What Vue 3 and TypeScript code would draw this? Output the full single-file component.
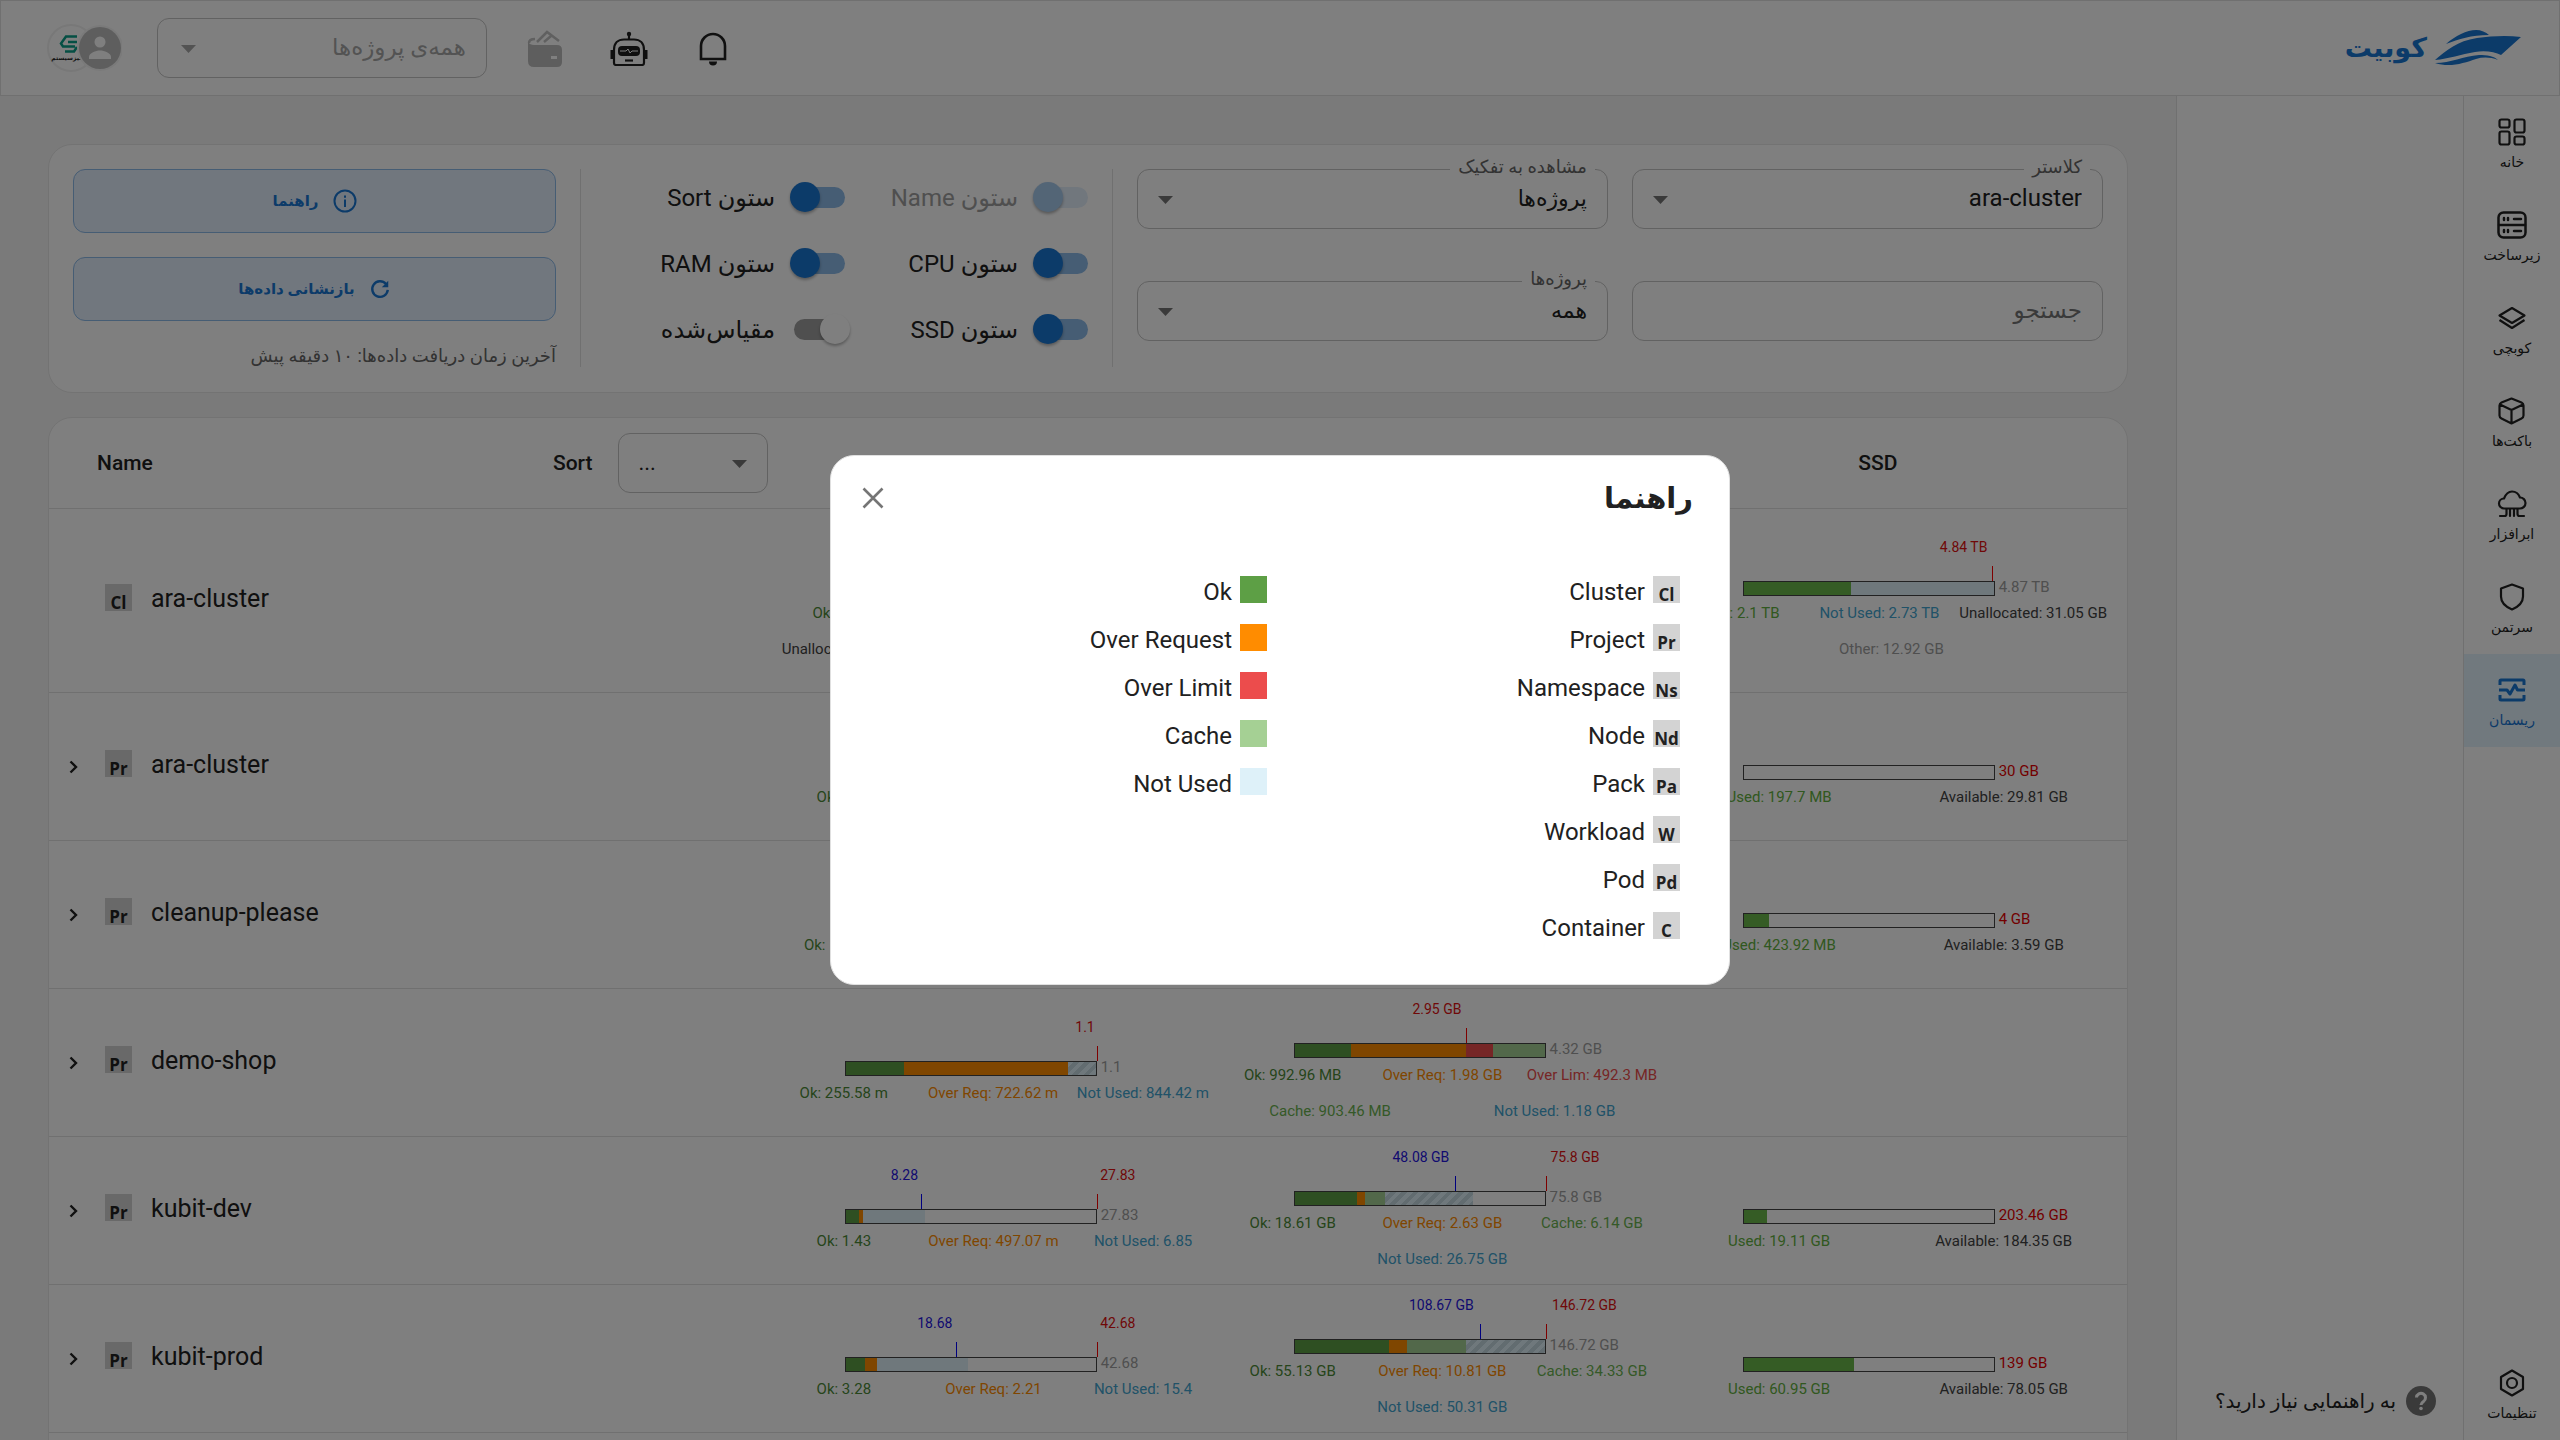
<script setup lang="ts">
interface Segment { kind: string; pct: number }
interface Mark { kind: 'request' | 'limit'; at: number; text: string; side: 'before' | 'after' }
interface Note { kind: string; text: string }
interface Usage {
  segments: Segment[]
  marks: Mark[]
  total: string
  totalKind: 'plain' | 'quota'
  notes: Note[][]
}
interface Row { badge: string; name: string; expandable: boolean; cells: (Usage | null)[] }

const blank: Note = { kind: 'ok', text: '' }

const rows: Row[] = [
  {
    badge: 'Cl',
    name: 'ara-cluster',
    expandable: false,
    cells: [
      {
        segments: [], marks: [], total: '', totalKind: 'plain',
        notes: [
          [{ kind: 'ok', text: 'Ok: 53.28' }, blank, blank],
          [{ kind: 'free', text: 'Unallocated: 38.43' }, blank, blank],
        ],
      },
      null,
      {
        segments: [{ kind: 'used', pct: 43 }, { kind: 'idle', pct: 57 }],
        marks: [{ kind: 'limit', at: 99, text: '4.84 TB', side: 'before' }],
        total: '4.87 TB', totalKind: 'plain',
        notes: [
          [{ kind: 'used', text: 'Used: 2.1 TB' }, { kind: 'idle', text: 'Not Used: 2.73 TB' }, { kind: 'free', text: 'Unallocated: 31.05 GB' }],
          [{ kind: 'other', text: 'Other: 12.92 GB' }],
        ],
      },
    ],
  },
  {
    badge: 'Pr',
    name: 'ara-cluster',
    expandable: true,
    cells: [
      { segments: [], marks: [], total: '', totalKind: 'plain', notes: [[{ kind: 'ok', text: 'Ok: 1.26' }, blank, blank]] },
      null,
      {
        segments: [], marks: [], total: '30 GB', totalKind: 'quota',
        notes: [[{ kind: 'used', text: 'Used: 197.7 MB' }, { kind: 'free', text: 'Available: 29.81 GB' }]],
      },
    ],
  },
  {
    badge: 'Pr',
    name: 'cleanup-please',
    expandable: true,
    cells: [
      { segments: [], marks: [], total: '', totalKind: 'plain', notes: [[{ kind: 'ok', text: 'Ok: 13.17 m' }, blank, blank]] },
      null,
      {
        segments: [{ kind: 'used', pct: 10 }], marks: [], total: '4 GB', totalKind: 'quota',
        notes: [[{ kind: 'used', text: 'Used: 423.92 MB' }, { kind: 'free', text: 'Available: 3.59 GB' }]],
      },
    ],
  },
  {
    badge: 'Pr',
    name: 'demo-shop',
    expandable: true,
    cells: [
      {
        segments: [{ kind: 'ok', pct: 23 }, { kind: 'request', pct: 66 }, { kind: 'striped', pct: 11 }],
        marks: [{ kind: 'limit', at: 100, text: '1.1', side: 'before' }],
        total: '1.1', totalKind: 'plain',
        notes: [[{ kind: 'ok', text: 'Ok: 255.58 m' }, { kind: 'request', text: 'Over Req: 722.62 m' }, { kind: 'idle', text: 'Not Used: 844.42 m' }]],
      },
      {
        segments: [{ kind: 'ok', pct: 22.5 }, { kind: 'request', pct: 46 }, { kind: 'limit', pct: 11 }, { kind: 'cache', pct: 20.5 }],
        marks: [{ kind: 'limit', at: 68.5, text: '2.95 GB', side: 'before' }],
        total: '4.32 GB', totalKind: 'plain',
        notes: [
          [{ kind: 'ok', text: 'Ok: 992.96 MB' }, { kind: 'request', text: 'Over Req: 1.98 GB' }, { kind: 'limit', text: 'Over Lim: 492.3 MB' }],
          [{ kind: 'cache', text: 'Cache: 903.46 MB' }, { kind: 'idle', text: 'Not Used: 1.18 GB' }],
        ],
      },
      null,
    ],
  },
  {
    badge: 'Pr',
    name: 'kubit-dev',
    expandable: true,
    cells: [
      {
        segments: [{ kind: 'ok', pct: 5 }, { kind: 'request', pct: 1.6 }, { kind: 'idle', pct: 24.8 }],
        marks: [
          { kind: 'request', at: 30, text: '8.28', side: 'before' },
          { kind: 'limit', at: 100, text: '27.83', side: 'after' },
        ],
        total: '27.83', totalKind: 'plain',
        notes: [[{ kind: 'ok', text: 'Ok: 1.43' }, { kind: 'request', text: 'Over Req: 497.07 m' }, { kind: 'idle', text: 'Not Used: 6.85' }]],
      },
      {
        segments: [{ kind: 'ok', pct: 24.6 }, { kind: 'request', pct: 3.6 }, { kind: 'cache', pct: 8 }, { kind: 'striped', pct: 35.2 }],
        marks: [
          { kind: 'request', at: 64, text: '48.08 GB', side: 'before' },
          { kind: 'limit', at: 100, text: '75.8 GB', side: 'after' },
        ],
        total: '75.8 GB', totalKind: 'plain',
        notes: [
          [{ kind: 'ok', text: 'Ok: 18.61 GB' }, { kind: 'request', text: 'Over Req: 2.63 GB' }, { kind: 'cache', text: 'Cache: 6.14 GB' }],
          [{ kind: 'idle', text: 'Not Used: 26.75 GB' }],
        ],
      },
      {
        segments: [{ kind: 'used', pct: 9 }], marks: [], total: '203.46 GB', totalKind: 'quota',
        notes: [[{ kind: 'used', text: 'Used: 19.11 GB' }, { kind: 'free', text: 'Available: 184.35 GB' }]],
      },
    ],
  },
  {
    badge: 'Pr',
    name: 'kubit-prod',
    expandable: true,
    cells: [
      {
        segments: [{ kind: 'ok', pct: 7.3 }, { kind: 'request', pct: 5.2 }, { kind: 'idle', pct: 36.5 }],
        marks: [
          { kind: 'request', at: 44, text: '18.68', side: 'before' },
          { kind: 'limit', at: 100, text: '42.68', side: 'after' },
        ],
        total: '42.68', totalKind: 'plain',
        notes: [[{ kind: 'ok', text: 'Ok: 3.28' }, { kind: 'request', text: 'Over Req: 2.21' }, { kind: 'idle', text: 'Not Used: 15.4' }]],
      },
      {
        segments: [{ kind: 'ok', pct: 37.8 }, { kind: 'request', pct: 7.2 }, { kind: 'cache', pct: 23.6 }, { kind: 'striped', pct: 31.4 }],
        marks: [
          { kind: 'request', at: 74, text: '108.67 GB', side: 'before' },
          { kind: 'limit', at: 100, text: '146.72 GB', side: 'after' },
        ],
        total: '146.72 GB', totalKind: 'plain',
        notes: [
          [{ kind: 'ok', text: 'Ok: 55.13 GB' }, { kind: 'request', text: 'Over Req: 10.81 GB' }, { kind: 'cache', text: 'Cache: 34.33 GB' }],
          [{ kind: 'idle', text: 'Not Used: 50.31 GB' }],
        ],
      },
      {
        segments: [{ kind: 'used', pct: 44 }], marks: [], total: '139 GB', totalKind: 'quota',
        notes: [[{ kind: 'used', text: 'Used: 60.95 GB' }, { kind: 'free', text: 'Available: 78.05 GB' }]],
      },
    ],
  },
]

const switches = [
  { label: 'ستون Name', on: true, disabled: true },
  { label: 'ستون Sort', on: true, disabled: false },
  { label: 'ستون CPU', on: true, disabled: false },
  { label: 'ستون RAM', on: true, disabled: false },
  { label: 'ستون SSD', on: true, disabled: false },
  { label: 'مقیاس‌شده', on: false, disabled: false },
]

const nav = [
  { label: 'خانه', icon: 'home' },
  { label: 'زیرساخت', icon: 'server' },
  { label: 'کوبچی', icon: 'layers' },
  { label: 'باکت‌ها', icon: 'box' },
  { label: 'ابرافزار', icon: 'cloud' },
  { label: 'سرتمن', icon: 'shield' },
  { label: 'ریسمان', icon: 'pulse' },
]

const kinds = [
  ['Cl', 'Cluster'], ['Pr', 'Project'], ['Ns', 'Namespace'], ['Nd', 'Node'],
  ['Pa', 'Pack'], ['W', 'Workload'], ['Pd', 'Pod'], ['C', 'Container'],
]
const colours = [
  ['ok', 'Ok'], ['request', 'Over Request'], ['limit', 'Over Limit'], ['cache', 'Cache'], ['idle', 'Not Used'],
]
</script>

<template>
  <div class="page" dir="rtl">
    <header class="topbar">
      <a class="brand" href="#">
        <svg width="86" height="36" viewBox="0 0 86 36" fill="#1976d2" aria-hidden="true">
          <path d="M11 14C20 6 32 0 41 0c5 0 10 2 13 5-18 0-30 4-43 9z" />
          <path d="M0 30C12 20 22 11 42 8c14-2 30-3 44-1L66 25c-6-3-16-5-26-3C26 24 14 29 0 30z" />
          <path d="M0 33c16 0 28-7 44-8 8 0 15 1 19 5-8-3-15-3-22-1-12 4-26 9-41 4z" />
        </svg>
        <span>کوبیت</span>
      </a>
      <div class="tools">
        <button class="tool" aria-label="اعلان‌ها">
          <svg width="36" height="36" viewBox="0 0 36 36" fill="none" stroke="#212121" stroke-width="2.600">
            <path d="M6 29V16a12 12 0 0 1 24 0v13z" /><path d="M14 31.500h8a4 4 0 0 1-8 0z" fill="#212121" stroke="none" />
          </svg>
        </button>
        <button class="tool" aria-label="دستیار">
          <svg width="38" height="36" viewBox="0 0 38 36" fill="none" stroke="#212121" stroke-width="2.200">
            <path d="M19 9V4" /><circle cx="19" cy="4" r="2.200" fill="#212121" stroke="none" />
            <path d="M4 33V20C4 13 8 9.500 14 9.500h10c6 0 10 3.500 10 10.500v13q0 2-2 2H6q-2 0-2-2z" />
            <path d="M2 20v9M36 20v9" stroke-width="3" />
            <rect x="8" y="16" width="22" height="10" rx="4" fill="#212121" stroke="none" />
            <path d="M10 21h6l2-2 2 4 2-2h6" stroke="#fff" stroke-width="1" /><path d="M15 30.500h8" />
          </svg>
        </button>
        <button class="tool" aria-label="کیف پول">
          <svg width="36" height="38" viewBox="0 0 36 38" fill="none">
            <path d="M2 14c0-3 2-4 6-4" stroke="#c0c0c0" stroke-width="2.500" /><path d="M10 13L20 3l12 9M17 13l7-6" stroke="#c0c0c0" stroke-width="2.500" />
            <path d="M1 13q2 3 6 3h23q5 0 5 5v12q0 5-5 5H7q-6 0-6-6z" fill="#bdbdbd" /><rect x="24" y="27" width="6" height="3" fill="#fff" />
          </svg>
        </button>
        <div class="pick pick-top">
          <select class="muted" aria-label="پروژه"><option>همه‌ی پروژه‌ها</option></select>
          <svg class="caret faint" width="15" height="8" viewBox="0 0 15 8"><path d="M0 0h15L7.500 8z" /></svg>
        </div>
        <div class="avatars">
          <svg width="76" height="50" viewBox="0 0 76 50" aria-hidden="true">
            <circle cx="25" cy="25" r="23" fill="#fff" stroke="#f0f0f0" stroke-width="2" />
            <path d="M31 13.500H20l-5 7 2 3h12M31 19H22M19 28.500h9l3-4.500" fill="none" stroke="#0a9f88" stroke-width="2.500" />
            <text x="21" y="37" text-anchor="middle" class="org">کیزسیستم</text>
            <circle cx="54" cy="25" r="23" fill="#f5f5f5" />
            <circle cx="54" cy="25" r="21" fill="#bdbdbd" />
            <circle cx="54" cy="19" r="5.500" fill="#fff" /><path d="M43 36v-2c0-4 7-6.500 11-6.500s11 2.500 11 6.500v2z" fill="#fff" />
          </svg>
        </div>
      </div>
    </header>

    <div class="body">
      <nav class="rail">
        <a v-for="item in nav" :key="item.icon" href="#" class="rail-item" :class="{ active: item.icon === 'pulse' }">
          <svg width="30" height="28" viewBox="0 0 30 28" fill="none" stroke="currentColor" stroke-width="2.200" stroke-linejoin="round" stroke-linecap="round" aria-hidden="true">
            <g v-if="item.icon === 'home'">
              <rect x="2.500" y="1.500" width="10" height="8" rx="2" /><rect x="2.500" y="13.500" width="10" height="13" rx="2" />
              <rect x="17.500" y="1.500" width="10" height="13" rx="2" /><rect x="17.500" y="18.500" width="10" height="8" rx="2" />
            </g>
            <g v-else-if="item.icon === 'server'">
              <rect x="1.500" y="1.500" width="27" height="25" rx="5" stroke-width="2.500" /><path d="M2 14h26" stroke-width="2.500" />
              <path d="M7 7v2M11 7v2M17 8h7M7 19v2M11 19v2M17 20h7" stroke-width="2.500" />
            </g>
            <g v-else-if="item.icon === 'layers'"><path d="M15 4l12.500 7.500L15 19 2.500 11.500zM2.500 16L15 24l12.500-8" stroke-linecap="butt" /></g>
            <g v-else-if="item.icon === 'box'">
              <path d="M14.500 1.500l10 4q2 1 2 3v10q0 2-2 3l-10 5-10-5q-2-1-2-3v-10q0-2 2-3zM3 7.500l11.500 5.500L26 7.500M14.500 13v13" />
            </g>
            <g v-else-if="item.icon === 'cloud'">
              <path d="M7 18.500a5 5 0 0 1 0-10C9 3.500 12 1.500 15 1.500s6.500 2 8 6a5.500 5.500 0 0 1 0 11zM13 19v7M17 19v7M9.500 19v5q0 2-2 2H3M20.500 19v5q0 2 2 2H27" />
            </g>
            <g v-else-if="item.icon === 'shield'"><path d="M15 1.500l11 4v8c0 6-4 10-11 13-7-3-11-7-11-13v-8z" /></g>
            <g v-else stroke-width="3" stroke-linecap="butt">
              <path d="M3 9V5q0-1 1-1h22q1 0 1 1v4M3 19v4q0 1 1 1h22q1 0 1-1v-4M2 14h8l3 4 5-9 2.500 5H28" />
            </g>
          </svg>
          <span>{{ item.label }}</span>
        </a>
        <a href="#" class="rail-item settings">
          <svg width="30" height="28" viewBox="0 0 30 28" fill="none" stroke="currentColor" stroke-width="2.200" stroke-linejoin="round" aria-hidden="true">
            <path d="M15 1.500L26 8v12l-11 6.500L4 20V8z" /><circle cx="15" cy="14" r="5" />
          </svg>
          <span>تنظیمات</span>
        </a>
      </nav>

      <aside class="panel">
        <a class="help" href="#">
          <svg width="30" height="30" viewBox="0 0 30 30" aria-hidden="true">
            <circle cx="15" cy="15" r="15" fill="#757575" />
            <path d="M10.500 11.500a4.500 4.500 0 1 1 7 4c-1.800 1.200-2.500 1.800-2.500 3.500" fill="none" stroke="#fff" stroke-width="3" /><circle cx="15" cy="22.500" r="1.800" fill="#fff" />
          </svg>
          <span>به راهنمایی نیاز دارید؟</span>
        </a>
      </aside>

      <main class="content">
        <section class="card filters">
          <div class="fields">
            <div class="pick">
              <label for="cluster">کلاستر</label>
              <select id="cluster"><option>ara-cluster</option></select>
              <svg class="caret" width="15" height="8" viewBox="0 0 15 8"><path d="M0 0h15L7.500 8z" /></svg>
            </div>
            <div class="pick">
              <label for="split">مشاهده به تفکیک</label>
              <select id="split"><option>پروژه‌ها</option></select>
              <svg class="caret" width="15" height="8" viewBox="0 0 15 8"><path d="M0 0h15L7.500 8z" /></svg>
            </div>
            <div class="pick">
              <input type="text" placeholder="جستجو" aria-label="جستجو" />
            </div>
            <div class="pick">
              <label for="projects">پروژه‌ها</label>
              <select id="projects"><option>همه</option></select>
              <svg class="caret" width="15" height="8" viewBox="0 0 15 8"><path d="M0 0h15L7.500 8z" /></svg>
            </div>
          </div>
          <div class="switches">
            <label v-for="s in switches" :key="s.label" class="switch" :class="{ disabled: s.disabled }">
              <input type="checkbox" :checked="s.on" :disabled="s.disabled" />
              <span>{{ s.label }}</span>
            </label>
          </div>
          <div class="actions">
            <button class="action">
              <svg width="24" height="24" viewBox="0 0 24 24" fill="none" stroke="currentColor" stroke-width="2">
                <circle cx="12" cy="12" r="10.500" /><path d="M12 10.500V18M12 6.500v2.200" />
              </svg>
              <span>راهنما</span>
            </button>
            <button class="action">
              <svg width="22" height="22" viewBox="0 0 24 24" fill="none" stroke="currentColor" stroke-width="2.600">
                <path d="M18.500 6.500A8.500 8.500 0 1 0 20.500 13" /><path d="M21 3v7h-7z" fill="currentColor" stroke="none" />
              </svg>
              <span>بازنشانی داده‌ها</span>
            </button>
            <p class="stamp">آخرین زمان دریافت داده‌ها: ۱۰ دقیقه پیش</p>
          </div>
        </section>

        <section class="card listing" dir="ltr">
          <table>
            <colgroup><col /><col class="c-sort" /><col class="c-use" /><col class="c-use" /><col class="c-last" /></colgroup>
            <thead>
              <tr>
                <th scope="col" class="h-name">Name</th>
                <th scope="col">
                  <div class="sorter">
                    <label for="sort">Sort</label>
                    <div class="pick">
                      <select id="sort"><option>...</option></select>
                      <svg class="caret" width="15" height="8" viewBox="0 0 15 8"><path d="M0 0h15L7.500 8z" /></svg>
                    </div>
                  </div>
                </th>
                <th scope="col" class="h-use">CPU</th>
                <th scope="col" class="h-use">RAM</th>
                <th scope="col" class="h-use last">SSD</th>
              </tr>
            </thead>
            <tbody>
              <tr v-for="(row, i) in rows" :key="i" :class="{ tall: !row.expandable }">
                <td colspan="2">
                  <div class="who">
                    <button v-if="row.expandable" class="chev" :aria-label="row.name">
                      <svg width="10" height="14" viewBox="0 0 10 14" fill="none" stroke="#212121" stroke-width="2.400"><path d="M1.500 1.500L7 7l-5.500 5.500" /></svg>
                    </button>
                    <span v-else class="chev"></span>
                    <span class="badge">{{ row.badge }}</span>
                    <span class="name">{{ row.name }}</span>
                  </div>
                </td>
                <td v-for="(cell, c) in row.cells" :key="c" :class="{ last: c === 2 }">
                  <div v-if="cell" class="usage">
                    <div class="gauge">
                      <div class="marks">
                        <template v-for="m in cell.marks" :key="m.kind">
                          <i class="tick" :class="m.kind" :style="{ left: m.at + '%' }"></i>
                          <span class="mark" :class="[m.kind, m.side]" :style="{ left: m.at + '%' }">{{ m.text }}</span>
                        </template>
                      </div>
                      <div class="bar">
                        <i v-for="s in cell.segments" :key="s.kind" :class="'bg-' + s.kind" :style="{ width: s.pct + '%' }"></i>
                        <span class="total" :class="cell.totalKind">{{ cell.total }}</span>
                      </div>
                    </div>
                    <div v-for="(line, l) in cell.notes" :key="l" class="notes">
                      <span v-for="(n, k) in line" :key="k" :class="'tx-' + n.kind">{{ n.text }}</span>
                    </div>
                  </div>
                </td>
              </tr>
            </tbody>
          </table>
        </section>
      </main>
    </div>

    <div class="backdrop">
      <div class="dialog" role="dialog" aria-modal="true" aria-labelledby="dialog-title">
        <div class="dialog-head">
          <h2 id="dialog-title">راهنما</h2>
          <button class="close" aria-label="بستن">
            <svg width="22" height="22" viewBox="0 0 22 22" fill="none" stroke="#757575" stroke-width="2.600"><path d="M1.500 1.500l19 19M20.500 1.500l-19 19" /></svg>
          </button>
        </div>
        <div class="guide">
          <ul>
            <li v-for="k in kinds" :key="k[0]"><span class="badge">{{ k[0] }}</span><span>{{ k[1] }}</span></li>
          </ul>
          <ul>
            <li v-for="c in colours" :key="c[0]"><i class="swatch" :class="'bg-' + c[0]"></i><span>{{ c[1] }}</span></li>
          </ul>
        </div>
      </div>
    </div>
  </div>
</template>

<style>
body { margin: 0; overflow: hidden; }
</style>

<style scoped>
* { box-sizing: border-box; }
.page {
  height: 100vh;
  display: flex;
  flex-direction: column;
  overflow: hidden;
  background: #f5f5f5;
  color: #212121;
  font-family: Roboto, "DejaVu Sans", sans-serif;
  font-size: 24px;
}
a { color: inherit; text-decoration: none; }
button { border: 0; padding: 0; background: none; font: inherit; color: inherit; }
svg { display: block; flex: none; }

.topbar {
  flex: none;
  height: 96px;
  display: flex;
  align-items: center;
  justify-content: space-between;
  padding: 0 38px 0 45px;
  background: #fff;
  border: 1px solid #e0e0e0;
}
.brand { display: flex; align-items: center; gap: 8px; color: #1976d2; font-size: 27px; font-weight: 700; }
.tools { display: flex; align-items: center; }
.tool { display: flex; align-items: center; justify-content: center; width: 84px; height: 60px; }
.pick-top { width: 330px; margin-inline: 16px 35px; }
.org { font: 700 6px "DejaVu Sans", sans-serif; fill: #212121; }

.body { flex: 1; min-height: 0; display: flex; }
.rail { flex: none; width: 97px; display: flex; flex-direction: column; background: #fff; border-left: 1px solid #e0e0e0; }
.rail-item {
  height: 93px;
  display: flex;
  flex-direction: column;
  align-items: center;
  justify-content: center;
  gap: 6px;
  padding-top: 5px;
  font-size: 14px;
  line-height: 20px;
}
.rail-item.active { background: #e3f2fd; color: #1976d2; }
.settings { margin-top: auto; }
.panel { flex: none; width: 287px; display: flex; align-items: flex-end; padding: 24px 27px; background: #fff; border-left: 1px solid #e0e0e0; }
.help { display: flex; align-items: center; gap: 10px; font-size: 20px; line-height: 30px; white-space: nowrap; }

.content { flex: 1; min-width: 0; padding: 48px 48px 0; overflow: hidden; display: flex; flex-direction: column; gap: 24px; }
.card { flex: none; background: #fff; border: 1px solid #e6e6e6; border-radius: 24px; }
.filters { display: flex; gap: 24px; padding: 24px 24px 25px; }
.fields { flex: 2 0 0; display: grid; grid-template-columns: 1fr 1fr; column-gap: 24px; row-gap: 52px; align-content: start; }
.pick { position: relative; }
.pick select, .pick input {
  appearance: none;
  display: block;
  width: 100%;
  height: 60px;
  padding: 0 20px 2px;
  border: 1px solid #c4c4c4;
  border-radius: 12px;
  background: #fff;
  color: #212121;
  font: inherit;
  font-size: 22px;
  opacity: 1;
}
.pick #cluster { font-size: 24px; }
.pick input::placeholder { color: #757575; opacity: 1; }
.pick select.muted { color: #a6a6a6; }
.pick input, .pick select.muted { font-size: 23px; }
.pick label { position: absolute; top: -15px; right: 13px; padding: 0 8px; background: #fff; color: #666; font-size: 18px; line-height: 26px; }
.caret { position: absolute; left: 21px; top: 27px; fill: #757575; pointer-events: none; }
.caret.faint { fill: #a6a6a6; }
.pick-top .caret { left: 24px; }

.switches {
  flex: 1 0 50px;
  min-width: 0;
  display: grid;
  grid-template-columns: 1fr 1fr;
  grid-auto-rows: 57px;
  row-gap: 9px;
  column-gap: 3px;
  padding: 0 24px;
  border-right: 1px solid #e0e0e0;
  border-left: 1px solid #e0e0e0;
}
.switch { display: flex; align-items: center; gap: 19px; white-space: nowrap; font-size: 24px; line-height: 28px; }
.switch input { appearance: none; position: relative; flex: none; width: 51px; height: 21px; margin: 0; border-radius: 11px; background: #9e9e9e; }
.switch input::before {
  content: "";
  position: absolute;
  top: -5px;
  right: -5px;
  width: 30px;
  height: 30px;
  border-radius: 50%;
  background: #fff;
  box-shadow: 0 2px 3px rgba(0, 0, 0, 0.3);
}
.switch input:checked { background: #8cbae8; }
.switch input:checked::before { right: 25px; background: #1976d2; }
.switch.disabled { color: #9e9e9e; }
.switch input:disabled { background: #e3eefa; }
.switch input:disabled::before { background: #a7caed; }

.actions { flex: 1 0 0; min-width: 0; display: flex; flex-direction: column; gap: 24px; }
.action {
  height: 64px;
  display: flex;
  align-items: center;
  justify-content: center;
  gap: 14px;
  border: 1px solid #8cbae8;
  border-radius: 12px;
  background: #e3eefd;
  color: #1976d2;
  font-size: 15px;
  font-weight: 700;
}
.stamp { margin: 0; color: #666; font-size: 18px; line-height: 22px; white-space: nowrap; }

.listing { min-height: 100vh; }
table { width: 100%; table-layout: fixed; border-collapse: separate; border-spacing: 0; }
.c-sort { width: 10.400%; }
.c-use { width: 21.600%; }
.c-last { width: 22.150%; }
th, td { padding: 0; border-bottom: 1px solid #e0e0e0; vertical-align: middle; }
th { height: 91px; font-size: 21px; font-weight: 500; text-align: left; }
.h-name { padding-left: 48px; }
.h-use { padding-right: 32px; text-align: center; }
.h-use.last { padding-right: 38px; }
td.last { padding-right: 11px; }
td { height: 148px; }
.tall td { height: 184px; }
.sorter { display: flex; align-items: center; gap: 25px; }
.sorter > label { font-size: 21px; }
.sorter .pick { width: 150px; font-weight: 400; }
.sorter .caret { left: auto; right: 21px; }
.who { display: flex; align-items: center; padding: 0 0 6px 20px; }
.chev { width: 10px; margin: 6px 26px 0 0; }
.badge {
  flex: none;
  width: 27px;
  height: 27px;
  background: #d3d3d3;
  font: 700 17px/38px "Open Sans", sans-serif;
  text-align: center;
  color: #212121;
}
.name { margin-left: 19px; padding-top: 3px; font-size: 25px; line-height: 28px; }

.usage { font-size: 15px; line-height: 18px; white-space: nowrap; }
.gauge { width: 56%; margin-left: 17%; }
.marks { position: relative; height: 48px; }
.tick { position: absolute; bottom: 0; width: 1px; height: 15px; }
.tick.limit { background: #f00; }
.tick.request { background: #00f; }
.mark { position: absolute; top: 5px; font-size: 14px; }
.mark.limit { color: #e01010; }
.mark.request { color: #2414e0; }
.mark.before { transform: translateX(-110%); }
.mark.after { transform: translateX(10%); }
.bar { position: relative; display: flex; height: 15px; border: 1px solid #424242; }
.usage:has(.total:empty) .bar { visibility: hidden; }
.total { position: absolute; left: 100%; top: -4px; padding-left: 5px; }
.total.plain { color: #9e9e9e; }
.total.quota { color: #e60000; }
.notes { display: flex; height: 36px; align-items: center; padding-bottom: 2px; }
.notes span { flex: 1 1 0; padding: 0 9px; text-align: center; }

.bg-ok { background: #5d9f45; }
.bg-used { background: #6ab84a; }
.bg-request { background: #ff8c00; }
.bg-limit { background: #ec4c4c; }
.bg-cache { background: #a5d094; }
.bg-idle { background: #def1f9; }
.bg-striped { background: repeating-linear-gradient(135deg, #def1f9 0 4px, #c4d8e0 4px 8px); }
.tx-ok { color: #4c8a36; }
.tx-used { color: #62b040; }
.tx-request { color: #ff8c00; }
.tx-limit { color: #ec4c4c; }
.tx-cache { color: #6bb350; }
.tx-idle { color: #42a5d0; }
.tx-free { color: #424242; }
.tx-other { color: #9e9e9e; }

.backdrop {
  position: fixed;
  inset: 0;
  display: flex;
  align-items: center;
  justify-content: center;
  background: rgba(0, 0, 0, 0.5);
}
.dialog { width: 900px; background: #fff; border: 1px solid #e0e0e0; border-radius: 24px; }
.dialog-head { display: flex; align-items: center; justify-content: space-between; padding: 18px 36px 0 31px; }
.dialog-head h2 { margin: 0; font-size: 29px; line-height: 48px; font-weight: 700; }
.guide { display: grid; grid-template-columns: 1fr 1fr; column-gap: 26px; padding: 54px 49px 40px; }
ul { list-style: none; margin: 0; padding: 0; display: flex; flex-direction: column; gap: 16px; }
li { display: flex; align-items: flex-start; gap: 8px; line-height: 32px; }
.swatch { width: 27px; height: 27px; }
</style>
